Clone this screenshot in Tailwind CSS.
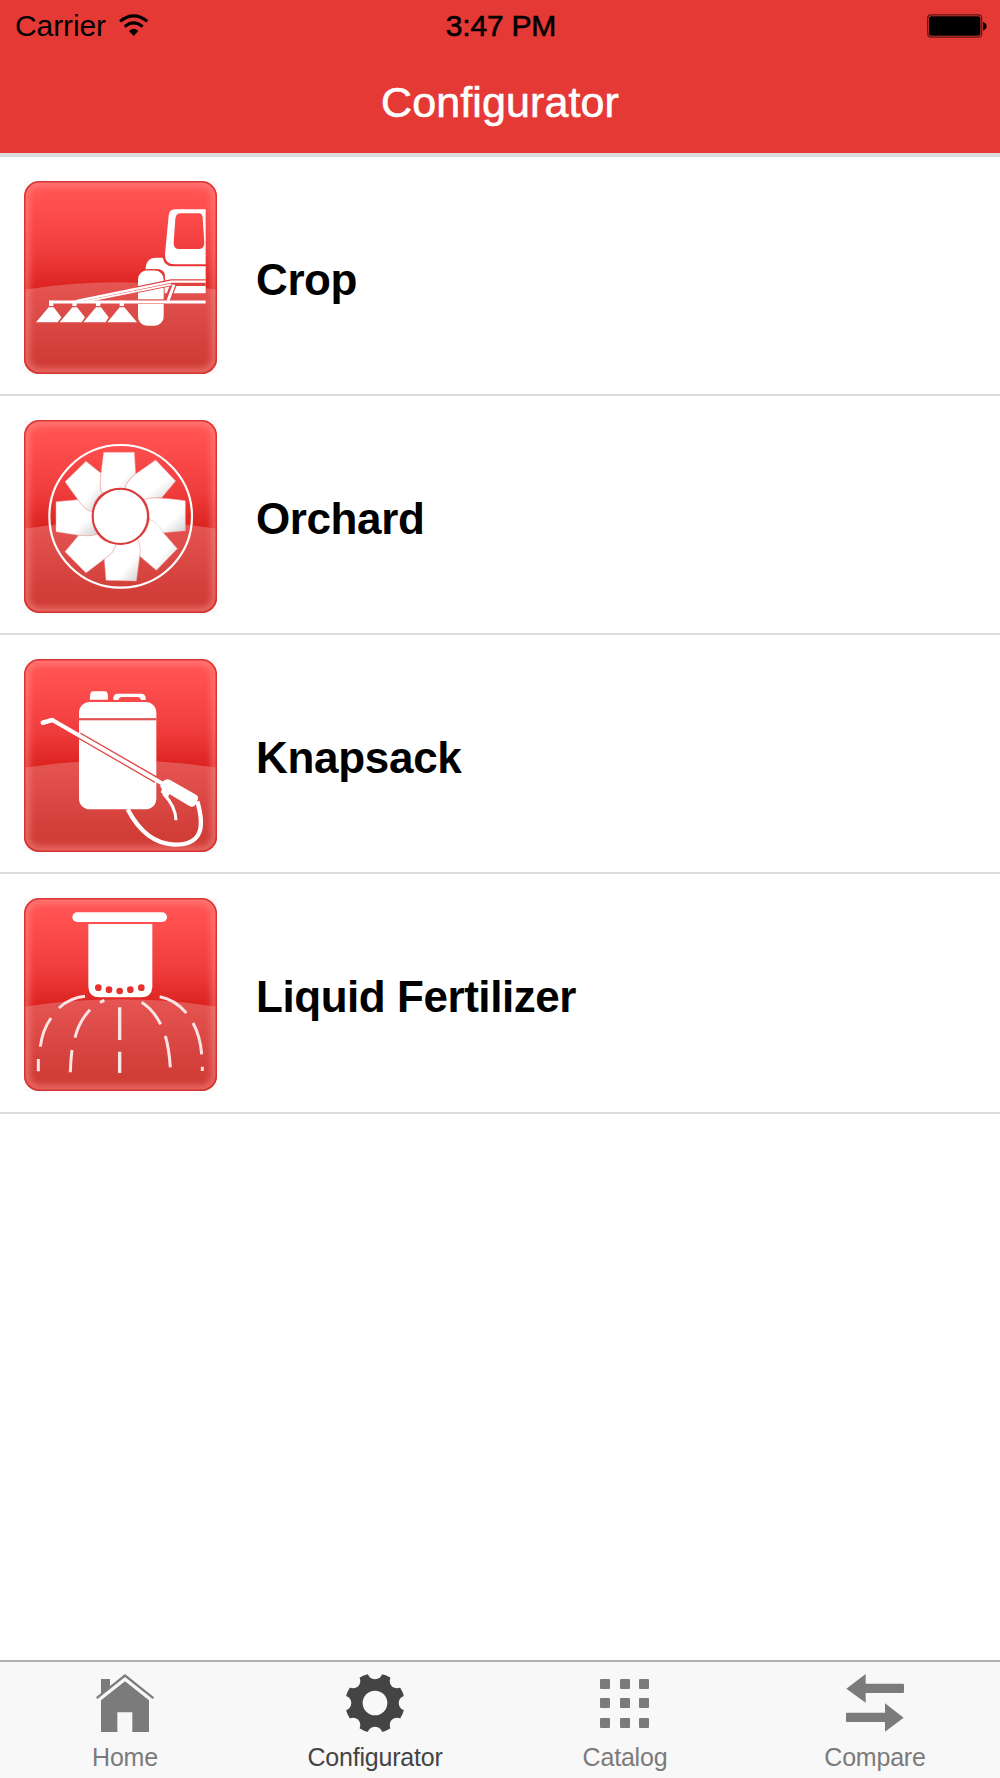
<!DOCTYPE html>
<html lang="en">
<head>
    <meta charset="UTF-8">
    <meta name="viewport" content="width=device-width, initial-scale=1.0">
    <title>Configurator</title>
    <script src="https://cdn.jsdelivr.net/npm/@tailwindcss/browser@4"></script>
</head>
<body class="bg-white font-['Liberation_Sans',Arial,sans-serif] text-black">
    <!-- Shared tile background -->
    <svg class="absolute w-0 h-0" aria-hidden="true">
        <defs>
            <linearGradient id="tileTop" x1="0" y1="0" x2="0" y2="1">
                <stop offset="0" stop-color="#ff5757"></stop>
                <stop offset=".12" stop-color="#ff4f4f"></stop>
                <stop offset=".38" stop-color="#ef3b3b"></stop>
                <stop offset=".55" stop-color="#dc2420"></stop>
            </linearGradient>
            <linearGradient id="tileBottom" x1="0" y1="0" x2="0" y2="1">
                <stop offset="0" stop-color="#e55553"></stop>
                <stop offset=".85" stop-color="#d03c36"></stop>
                <stop offset="1" stop-color="#d03c36"></stop>
            </linearGradient>
            <linearGradient id="blade" x1="0" y1="0" x2="1" y2="1">
                <stop offset=".65" stop-color="#fff"></stop>
                <stop offset="1" stop-color="#cfcfcf"></stop>
            </linearGradient>
            <filter id="soft" x="-10%" y="-10%" width="120%" height="120%">
                <feGaussianBlur stdDeviation="9"></feGaussianBlur>
            </filter>
            <clipPath id="tileClip"><rect width="579" height="579" rx="46"></rect></clipPath>
            <symbol id="tile" viewBox="0 0 579 579">
                <rect width="579" height="579" fill="#f9f9f9"></rect>
                <g clip-path="url(#tileClip)">
                    <rect width="579" height="579" fill="url(#tileTop)"></rect>
                    <path d="M0 326Q289 282 579 326V579H0Z" fill="url(#tileBottom)"></path>
                    <rect x="3" y="3" width="573" height="573" rx="44" fill="none" stroke="#ff9490" stroke-opacity=".5" stroke-width="28" filter="url(#soft)"></rect>
                    <rect x="2" y="2" width="575" height="575" rx="45" fill="none" stroke="#d22a2a" stroke-opacity=".85" stroke-width="5"></rect>
                </g>
            </symbol>
        </defs>
    </svg>

    <div class="flex flex-col w-[1000px] h-[1778px]">
        <!-- Header -->
        <header class="h-[157px] bg-[#e53935] border-b-4 border-[#dcdcdc]">
            <div class="grid grid-cols-3 items-center h-[50px] pl-[15px] pr-[13px]">
                <div class="flex items-center gap-[13px]">
                    <span class="text-[30px] leading-[50px] pt-px tracking-[-0.1px]">Carrier</span>
                    <svg class="w-[30px] h-[22px] -mt-[2px]" viewBox="356 38 90 66">
                        <g fill="none" stroke="#000" stroke-width="9">
                            <path d="M359 60Q400 27 441 60"></path>
                            <path d="M373 76Q400 53 427 76"></path>
                        </g>
                        <path d="M386 89Q400 76 414 89L400 104Z"></path>
                    </svg>
                </div>
                <div class="text-center text-[30px] leading-[50px] pt-px tracking-[-0.2px] [-webkit-text-stroke:0.6px_#000]">3:47 PM</div>
                <div class="flex justify-end items-center">
                    <svg class="w-[60px] h-[24px]" viewBox="0 0 60 24">
                        <rect x=".7" y=".8" width="54" height="22.4" rx="3.5" fill="none" stroke="#5c1715" stroke-width="1.2"></rect>
                        <rect x="2" y="2.2" width="51.4" height="19.6" rx="2.5"></rect>
                        <path d="M56 8Q59.6 9 59.6 12T56 16.5Z"></path>
                    </svg>
                </div>
            </div>
            <h1 class="text-center text-[43px] leading-[105px] h-[103px] text-white tracking-[0.1px] [-webkit-text-stroke:0.6px_#fff]">Configurator</h1>
        </header>

        <!-- Categories -->
        <ul class="flex-1">
            <li class="flex items-start h-[239px] pt-6 pl-6 border-b-2 border-[#dcdcdc]">
                <svg class="w-[193px] h-[193px]" viewBox="0 0 579 579">
                    <use href="#tile"></use>
                    <g transform="translate(-42 -32)" fill="#fff">
                        <path d="M587 117H495Q478 117 476 136L465 250Q463 282 494 282H587ZM512 129H566Q577 129 578 142L583 217Q583 235 568 236H508Q491 236 491 218L496 145Q498 129 512 129Z" fill-rule="evenodd"></path>
                        <path d="M407 297V290Q411 262 438 262H458Q464 288 490 288H587V369H464V310Q458 296 440 296Z"></path>
                        <rect x="384" y="300" width="77" height="166" rx="27"></rect>
                        <path d="M409 298H436Q464 300 464 328V345" fill="none" stroke="#e5403c" stroke-width="4"></path>
                        <g fill="none">
                            <path d="M380 358L484 337H587" stroke="#e0423f" stroke-width="20"></path>
                            <path d="M472 391L491 342" stroke="#e0423f" stroke-width="19"></path>
                            <path d="M384 394H464" stroke="#dc4743" stroke-width="14"></path>
                            <path d="M200 392L484 334H587" stroke="#fff" stroke-width="7"></path>
                            <path d="M225 394L484 342" stroke="#fff" stroke-width="5"></path>
                            <path d="M474 391L492 343" stroke="#fff" stroke-width="9"></path>
                            <path d="M117 395H587" stroke="#fff" stroke-width="9"></path>
                        </g>
                        <path d="M117 391H130V407H117ZM187 391H200V407H187ZM258 391H271V407H258ZM329 391H342V407H329Z"></path>
                        <path d="M78 456L116 411H131L154 441L143 456ZM149 456L187 411H201L225 441L215 456ZM220 456L258 411H273L296 441L287 456ZM292 456L329 411H343L381 456Z"></path>
                    </g>
                </svg>
                <span class="ml-[39px] mt-[74px] text-[44px] leading-[50px] font-bold tracking-[-0.4px]">Crop</span>
            </li>
            <li class="flex items-start h-[239px] pt-6 pl-6 border-b-2 border-[#dcdcdc]">
                <svg class="w-[193px] h-[193px]" viewBox="0 0 579 579">
                    <use href="#tile"></use>
                    <g transform="translate(-42 -30)">
                        <circle cx="332" cy="319" r="214" fill="none" stroke="#fff" stroke-width="6.5"></circle>
                        <g fill="url(#blade)" stroke="#f0aaa8" stroke-width="1.5">
                            <path d="M281 127H373L377 192Q347 214 345 237Q305 232 277 250Q266 230 273 190Z"></path>
                            <path d="M437 150L497 213L455 263Q420 262 403 269Q380 245 345 237Q348 215 377 192Z"></path>
                            <path d="M526 272V362L460 368Q435 338 418 328Q418 290 403 269Q420 257 526 272Z"></path>
                            <path d="M502 416L439 481L389 438Q393 405 383 387Q414 366 418 328Q442 335 460 368Z"></path>
                            <path d="M379 513L288 511L283 447Q314 428 318 402Q355 407 383 387Q394 408 389 438Z"></path>
                            <path d="M228 489L165 425L206 376Q240 380 262 373Q280 400 318 402Q314 428 283 447Z"></path>
                            <path d="M138 365V275L204 269Q225 302 247 305Q242 345 262 373Q240 380 206 376Z"></path>
                            <path d="M165 215L228 154L273 190Q266 230 277 250Q250 270 247 305Q225 302 204 269Z"></path>
                        </g>
                        <circle cx="331" cy="319" r="83" fill="#fff" stroke="#d93a37" stroke-width="6"></circle>
                    </g>
                </svg>
                <span class="ml-[39px] mt-[74px] text-[44px] leading-[50px] font-bold tracking-[-0.4px]">Orchard</span>
            </li>
            <li class="flex items-start h-[239px] pt-6 pl-6 border-b-2 border-[#dcdcdc]">
                <svg class="w-[193px] h-[193px]" viewBox="0 0 579 579">
                    <use href="#tile"></use>
                    <g transform="translate(-42 -28)">
                        <path d="M239 150L241 132Q242 125 250 125H284Q292 125 293 132L294 150Z" fill="#fff"></path>
                        <path d="M310 151V144Q312 132 324 132H394Q405 132 407 144V151H393Q391 142 383 142H336Q328 142 325 151Z" fill="#fff"></path>
                        <rect x="207" y="157" width="232" height="322" rx="32" fill="#fff"></rect>
                        <path d="M207 209H439" stroke="#d93333" stroke-width="6"></path>
                        <path d="M207 209H439" stroke="#f3a09e" stroke-width="1"></path>
                        <path d="M207 257L439 391" stroke="#e04a47" stroke-width="20"></path>
                        <g fill="none" stroke="#fff">
                            <path d="M98 220L127 211L458 402" stroke-width="12" stroke-linejoin="round"></path>
                            <path d="M98 219L126 211" stroke-width="13" stroke-linecap="round"></path>
                            <path d="M353 479C385 540 430 584 495 585C575 585 585 535 562 455" stroke-width="13"></path>
                            <path d="M460 432Q497 470 498 512" stroke-width="9"></path>
                        </g>
                        <path d="M457 397Q466 386 479 390L558 435Q567 440 563 451L556 466Q549 474 538 469L478 433L474 444L452 428L456 418L450 410Z" fill="#fff"></path>
                    </g>
                </svg>
                <span class="ml-[39px] mt-[74px] text-[44px] leading-[50px] font-bold tracking-[-0.3px]">Knapsack</span>
            </li>
            <li class="flex items-start h-[240px] pt-6 pl-6 border-b-2 border-[#dcdcdc]">
                <svg class="w-[193px] h-[193px]" viewBox="0 0 579 579">
                    <use href="#tile"></use>
                    <g transform="translate(-42 -30)">
                        <rect x="187" y="73" width="284" height="29" rx="14.5" fill="#fff"></rect>
                        <path d="M235 108H427V297Q425 328 393 328H269Q237 328 235 297Z" fill="#fff"></path>
                        <g fill="#e5302d">
                            <circle cx="265" cy="299" r="10"></circle>
                            <circle cx="297" cy="305" r="10"></circle>
                            <circle cx="329" cy="309" r="10"></circle>
                            <circle cx="361" cy="305" r="10"></circle>
                            <circle cx="394" cy="299" r="10"></circle>
                        </g>
                        <g fill="none" stroke="#fbe4e3" stroke-width="9">
                            <path d="M225 325Q180 329 147 360M123 390Q97 427 91 476M85 513V550"></path>
                            <path d="M283 337L270 343M240 365Q207 400 195 449M186 486Q182 515 181 553"></path>
                            <path d="M329 358V456M329 491V555" stroke-width="10"></path>
                            <path d="M395 343Q430 365 452 409M466 444Q477 480 481 538"></path>
                            <path d="M449 326Q495 334 529 375M549 405Q571 445 575 499M577 536V549"></path>
                        </g>
                    </g>
                </svg>
                <span class="ml-[39px] mt-[74px] text-[44px] leading-[50px] font-bold tracking-[-0.45px]">Liquid Fertilizer</span>
            </li>
        </ul>

        <!-- Tab bar -->
        <nav class="grid grid-cols-4 h-[118px] bg-[#f8f8f8] border-t-2 border-[#b2b2b2] text-[25px] leading-[30px] tracking-[-0.2px] text-[#7b7b7b]">
            <a class="flex flex-col items-center pt-3">
                <svg class="w-[58px] h-[58px]" viewBox="108 72 174 174" fill="#7b7b7b">
                    <path d="M123 133V87H150V109Z"></path>
                    <path d="M108 142L195 72L282 142L278 147L195 81L112 147Z"></path>
                    <path d="M195 94L267 151V246H217V187H172V246H123V151Z"></path>
                </svg>
                <span class="mt-[10px]">Home</span>
            </a>
            <a class="flex flex-col items-center pt-3 text-[#444]">
                <svg class="w-[58px] h-[58px]" viewBox="-87 -87 174 174">
                    <mask id="gearCuts" maskUnits="userSpaceOnUse" x="-90" y="-90" width="180" height="180">
                        <rect x="-90" y="-90" width="180" height="180" fill="#fff"></rect>
                        <circle r="37"></circle>
                        <circle cy="-93" r="22"></circle>
                        <circle cy="93" r="22"></circle>
                        <circle cx="-93" r="22"></circle>
                        <circle cx="93" r="22"></circle>
                        <circle cx="66" cy="66" r="22"></circle>
                        <circle cx="-66" cy="66" r="22"></circle>
                        <circle cx="66" cy="-66" r="22"></circle>
                        <circle cx="-66" cy="-66" r="22"></circle>
                    </mask>
                    <circle r="89" fill="#444" mask="url(#gearCuts)"></circle>
                </svg>
                <span class="mt-[10px]">Configurator</span>
            </a>
            <a class="flex flex-col items-center pt-3">
                <span class="grid grid-cols-3 content-center gap-[9.5px] h-[58px] -ml-px">
                    <i class="size-[10px] rounded-[1px] bg-[#7b7b7b]"></i>
                    <i class="size-[10px] rounded-[1px] bg-[#7b7b7b]"></i>
                    <i class="size-[10px] rounded-[1px] bg-[#7b7b7b]"></i>
                    <i class="size-[10px] rounded-[1px] bg-[#7b7b7b]"></i>
                    <i class="size-[10px] rounded-[1px] bg-[#7b7b7b]"></i>
                    <i class="size-[10px] rounded-[1px] bg-[#7b7b7b]"></i>
                    <i class="size-[10px] rounded-[1px] bg-[#7b7b7b]"></i>
                    <i class="size-[10px] rounded-[1px] bg-[#7b7b7b]"></i>
                    <i class="size-[10px] rounded-[1px] bg-[#7b7b7b]"></i>
                </span>
                <span class="mt-[10px]">Catalog</span>
            </a>
            <a class="flex flex-col items-center pt-3">
                <svg class="w-[58px] h-[58px]" viewBox="918 72 174 174" fill="#7b7b7b">
                    <path d="M919 116L977 72V101H1089Q1092 101 1092 104V126Q1092 129 1089 129H977V158Z"></path>
                    <path d="M1091 203L1035 160V188H921Q918 188 918 191V213Q918 216 921 216H1035V245Z"></path>
                </svg>
                <span class="mt-[10px]">Compare</span>
            </a>
        </nav>
    </div>
</body>
</html>
